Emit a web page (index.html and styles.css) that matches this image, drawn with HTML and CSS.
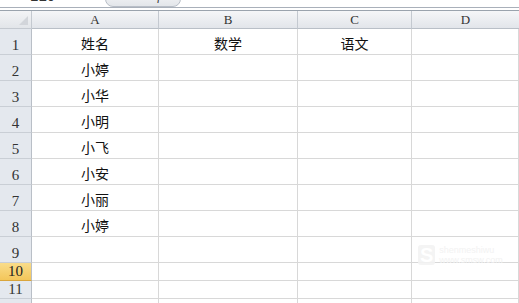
FILE: index.html
```html
<!DOCTYPE html>
<html lang="zh">
<head>
  <meta charset="UTF-8" />
  <title>成绩表</title>
  <link rel="stylesheet" href="styles.css">
</head>
<body>
  <div class="formula-bar">
    <span class="name-box">E10</span>
    <span class="fx-box"><i>fx</i></span>
  </div>
  <div class="sheet">
    <div class="corner"><span class="tri"></span></div>
    <div class="col-head">A</div>
    <div class="col-head">B</div>
    <div class="col-head">C</div>
    <div class="col-head last">D</div>

    <div class="row-head">1</div><div class="cell">姓名</div><div class="cell">数学</div><div class="cell">语文</div><div class="cell"></div>
    <div class="row-head">2</div><div class="cell">小婷</div><div class="cell"></div><div class="cell"></div><div class="cell"></div>
    <div class="row-head">3</div><div class="cell">小华</div><div class="cell"></div><div class="cell"></div><div class="cell"></div>
    <div class="row-head">4</div><div class="cell">小明</div><div class="cell"></div><div class="cell"></div><div class="cell"></div>
    <div class="row-head">5</div><div class="cell">小飞</div><div class="cell"></div><div class="cell"></div><div class="cell"></div>
    <div class="row-head">6</div><div class="cell">小安</div><div class="cell"></div><div class="cell"></div><div class="cell"></div>
    <div class="row-head">7</div><div class="cell">小丽</div><div class="cell"></div><div class="cell"></div><div class="cell"></div>
    <div class="row-head">8</div><div class="cell">小婷</div><div class="cell"></div><div class="cell"></div><div class="cell"></div>
    <div class="row-head">9</div><div class="cell"></div><div class="cell"></div><div class="cell"></div><div class="cell"></div>
    <div class="row-head short active">10</div><div class="cell"></div><div class="cell"></div><div class="cell"></div><div class="cell"></div>
    <div class="row-head short">11</div><div class="cell"></div><div class="cell"></div><div class="cell"></div><div class="cell"></div>
    <div class="row-head short"></div><div class="cell"></div><div class="cell"></div><div class="cell"></div><div class="cell"></div>
  </div>
  <div class="watermark"><b>S</b><span>shenmeshiwu<br>www.smsw.com</span></div>
</body>
</html>
```

FILE: styles.css
```css
body {
  margin: 0;
  width: 519px;
  height: 303px;
  overflow: hidden;
  background: #fff;
  font-family: "Liberation Serif", "Noto Sans CJK SC", serif;
  position: relative;
}
.formula-bar {
  height: 7px;
  border-bottom: 1px solid #a9b0ba;
  position: relative;
  background: #fff;
}
.name-box {
  position: absolute;
  left: 30px;
  top: -11px;
  font-size: 14px;
  color: #333;
  font-family: "Liberation Mono", monospace;
}
.fx-box {
  position: absolute;
  left: 105px;
  top: -8px;
  width: 74px;
  height: 13px;
  border: 1px solid #b8bec7;
  border-radius: 0 0 8px 8px;
  background: linear-gradient(#f4f5f7, #e3e6ea);
}
.fx-box i {
  position: absolute;
  right: 14px;
  top: -4px;
  font-size: 12px;
  color: #333;
  font-family: "Liberation Serif", serif;
}
.sheet {
  margin-top: 2px;
  display: grid;
  grid-template-columns: 32px 127px 139px 114px 107px;
  grid-template-rows: 18px repeat(9, 26px) 18px 18px 18px;
  border-top: 1px solid #9aa3ad;
}
.corner {
  background: linear-gradient(#f3f4f6, #e2e5e9);
  border-right: 1px solid #c4c9d0;
  border-bottom: 1px solid #c4c9d0;
  position: relative;
}
.tri {
  position: absolute;
  right: 3px;
  bottom: 3px;
  border-left: 9px solid transparent;
  border-bottom: 9px solid #d2d5da;
}
.col-head {
  background: linear-gradient(#f5f6f8, #e2e5ea);
  border-right: 1px solid #c4c9d0;
  border-bottom: 1px solid #b9bfc7;
  text-align: center;
  font-size: 13px;
  line-height: 17px;
  color: #333;
}
.col-head.last {
  border-right: none;
}
.row-head {
  background: #e4e8ee;
  border-right: 1px solid #b9bfc7;
  border-bottom: 1px solid #c9ced5;
  text-align: center;
  font-size: 15px;
  color: #333;
  display: flex;
  align-items: flex-end;
  justify-content: center;
  padding-bottom: 1px;
  line-height: 15px;
}
.row-head.active {
  background: linear-gradient(#f9dc8a, #f3c65a);
  border-bottom-color: #d9a53c;
  color: #222;
}
.cell {
  border-right: 1px solid #d8d8d8;
  border-bottom: 1px solid #d8d8d8;
  font-family: "Noto Sans CJK SC", sans-serif;
  font-size: 14px;
  color: #111;
  text-align: center;
  display: flex;
  align-items: flex-end;
  justify-content: center;
  padding-bottom: 2px;
  line-height: 18px;
}
.watermark {
  position: absolute;
  left: 418px;
  top: 245px;
  display: flex;
  align-items: center;
  gap: 4px;
  opacity: 0.9;
}
.watermark b {
  font-family: "Liberation Sans", sans-serif;
  font-size: 20px;
  background: #f3f3f3;
  color: #fff;
  border-radius: 3px;
  padding: 0 2px;
  line-height: 20px;
}
.watermark span {
  font-family: "Liberation Sans", sans-serif;
  font-size: 9px;
  line-height: 10px;
  color: #f2f2f2;
}
```
